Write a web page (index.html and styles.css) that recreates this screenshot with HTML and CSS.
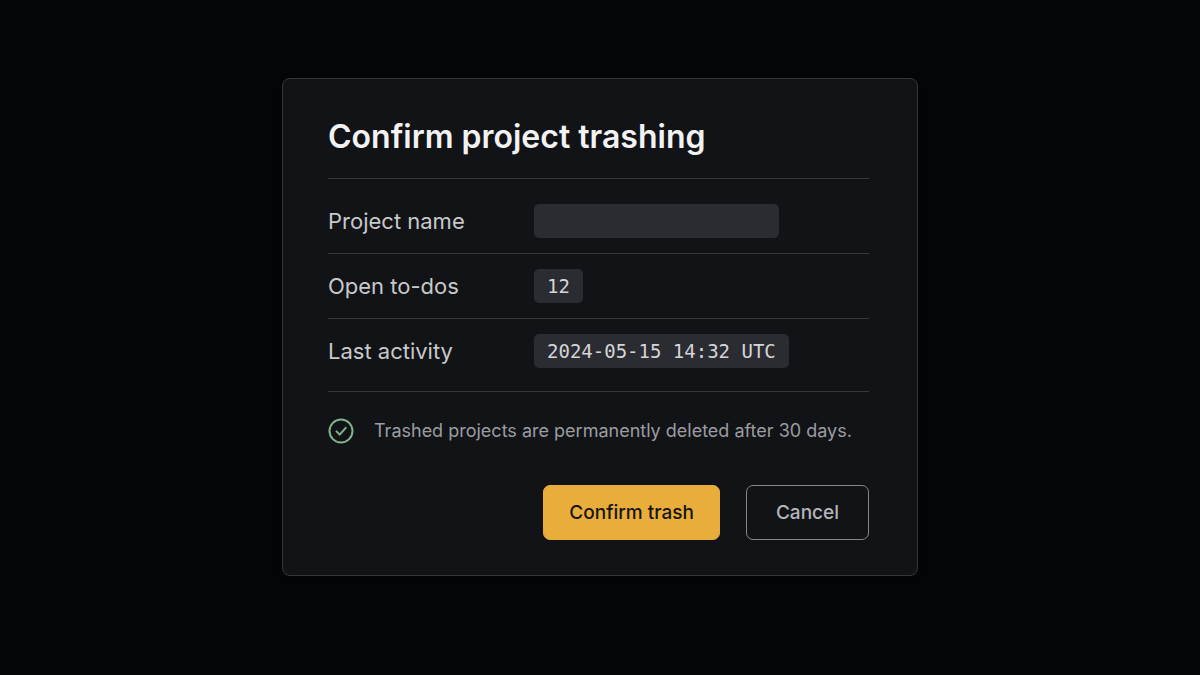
FILE: index.html
```html
<!DOCTYPE html>
<html lang="en">
<head>
  <meta charset="UTF-8">
  <meta name="viewport" content="width=device-width, initial-scale=1">
  <title>Confirm project trashing</title>
  <link rel="stylesheet" href="styles.css">
</head>
<body>
  <form class="dialog" role="dialog" aria-labelledby="dialog-title">
    <h1 class="dialog-title" id="dialog-title">Confirm project trashing</h1>

    <div class="details">
      <div class="row">
        <label class="row-label" for="project-name">Project name</label>
        <input class="value name-input" type="text" id="project-name">
      </div>
      <div class="row">
        <label class="row-label" for="open-todos">Open to-dos</label>
        <output class="value" id="open-todos">12</output>
      </div>
      <div class="row">
        <label class="row-label" for="last-activity">Last activity</label>
        <output class="value" id="last-activity">2024-05-15 14:32 UTC</output>
      </div>
    </div>

    <p class="note">
      <svg class="note-icon" viewBox="0 0 26 26" aria-hidden="true">
        <circle cx="13" cy="13" r="11.5"/>
        <path d="M8.5 13.4l3.2 3.2 6-6.8"/>
      </svg>
      Trashed projects are permanently deleted after 30 days.
    </p>

    <div class="actions">
      <button class="button button-confirm" type="submit">Confirm trash</button>
      <button class="button button-cancel" type="button">Cancel</button>
    </div>
  </form>
</body>
</html>
```

FILE: styles.css
```css
* {
  box-sizing: border-box;
}

body {
  font-family: Inter, sans-serif;
  background-color: #050609;
  color: #c8c9cb;
  margin: 0;
  padding: 78px 20px;
}

.dialog {
  width: 100%;
  max-width: 636px;
  margin: 0 auto;
  padding: 36px 48px 35px 45px;
  background-color: #111317;
  border: 1px solid #36383b;
  border-radius: 8px;
  box-shadow: 0 4px 16px rgba(0, 0, 0, 0.5);
}

.dialog-title {
  margin: 0;
  padding-bottom: 19px;
  border-bottom: 1px solid #36383b;
  color: #f2f2f2;
  font-size: 32px;
  font-weight: 600;
  line-height: 44px;
}

.details {
  padding: 10px 0 8px;
  border-bottom: 1px solid #36383b;
}

.row {
  display: flex;
  align-items: center;
  padding: 15px 0;
}

.row + .row {
  border-top: 1px solid #36383b;
}

.row-label {
  flex: 0 0 206px;
  font-size: 22px;
  line-height: 34px;
}

.value {
  height: 34px;
  padding: 0 13px;
  border: none;
  border-radius: 5px;
  background-color: #2b2c31;
  color: #d4d5d8;
  font-family: "DejaVu Sans Mono", monospace;
  font-size: 19px;
  line-height: 34px;
}

.name-input {
  width: 245px;
}

.note {
  display: flex;
  align-items: center;
  gap: 20px;
  margin: 25px 0 40px;
  color: #9b9da1;
  font-size: 18px;
  line-height: 28px;
}

.note-icon {
  flex: none;
  width: 26px;
  height: 26px;
  fill: none;
  stroke: #80b48b;
  stroke-width: 2;
  stroke-linecap: round;
  stroke-linejoin: round;
}

.actions {
  display: flex;
  flex-wrap: wrap;
  justify-content: flex-end;
  gap: 26px;
}

.button {
  height: 55px;
  padding: 0 25px;
  border: 1px solid #e9ad3b;
  border-radius: 7px;
  font-family: inherit;
  font-size: 19px;
  font-weight: 500;
  cursor: pointer;
}

.button-confirm {
  background-color: #e9ad3b;
  color: #17150f;
}

.button-cancel {
  padding: 0 29px;
  background-color: transparent;
  border-color: #85878b;
  color: #b4b6ba;
}
```
